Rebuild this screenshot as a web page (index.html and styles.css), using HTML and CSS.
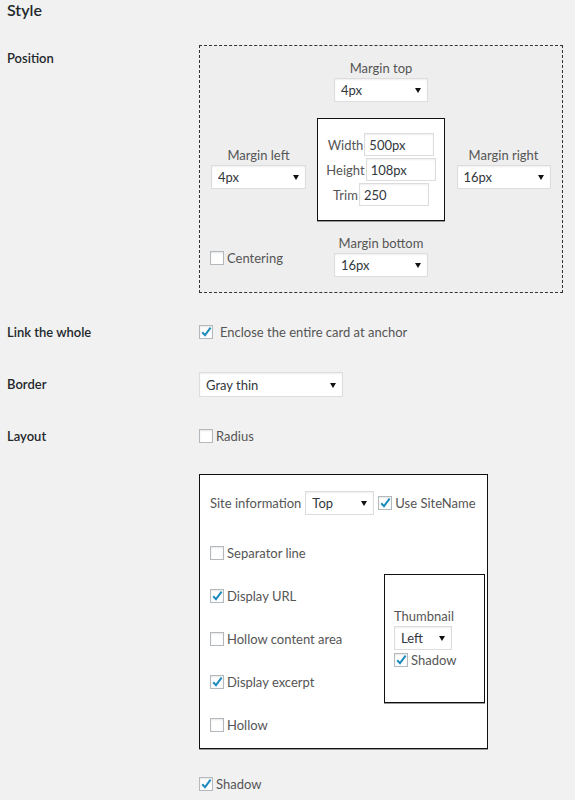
FILE: index.html
```html
<!DOCTYPE html>
<html lang="en">
<head>
<meta charset="utf-8">
<title>Style</title>
<link rel="stylesheet" href="styles.css">
</head>
<body>
<div class="page">
  <h2 class="title">Style</h2>

  <div class="row row-position">
    <div class="th th-position">Position</div>
    <div class="td">
      <div class="pos-box">
        <div class="pos-top">
          <div class="fgroup">
            <div class="flabel">Margin top</div>
            <span class="select w94"><select><option>4px</option></select></span>
          </div>
        </div>
        <div class="pos-mid">
          <div class="fgroup side">
            <div class="flabel">Margin left</div>
            <span class="select w95"><select><option>4px</option></select></span>
          </div>
          <div class="size-box">
            <div class="size-row"><label>Width</label><input class="txt" type="text" value="500px"></div>
            <div class="size-row"><label>Height</label><input class="txt" type="text" value="108px"></div>
            <div class="size-row"><label>Trim</label><input class="txt" type="text" value="250"></div>
          </div>
          <div class="fgroup side">
            <div class="flabel">Margin right</div>
            <span class="select w94"><select><option>16px</option></select></span>
          </div>
        </div>
        <div class="pos-bot">
          <label class="check centering"><span class="cb"></span>Centering</label>
          <div class="fgroup">
            <div class="flabel">Margin bottom</div>
            <span class="select w94"><select><option>16px</option></select></span>
          </div>
          <div></div>
        </div>
      </div>
    </div>
  </div>

  <div class="row row-link">
    <div class="th">Link the whole</div>
    <div class="td">
      <label class="check link-check"><span class="cb"><svg viewBox="0 0 14 14" width="14" height="14"><path d="M3.2 7.2 L6 10.2 L11.6 2.6" fill="none" stroke="#1e8cbe" stroke-width="2"/></svg></span>Enclose the entire card at anchor</label>
    </div>
  </div>

  <div class="row row-border">
    <div class="th th-border">Border</div>
    <div class="td">
      <span class="select w144 tall"><select><option>Gray thin</option></select></span>
    </div>
  </div>

  <div class="row row-layout">
    <div class="th">Layout</div>
    <div class="td">
      <label class="check"><span class="cb"></span>Radius</label>
      <div class="layout-box">
        <div class="site-row">
          <span class="site-label">Site information</span>
          <span class="select w69 h23"><select><option>Top</option></select></span>
          <label class="check sitename"><span class="cb"><svg viewBox="0 0 14 14" width="14" height="14"><path d="M3.2 7.2 L6 10.2 L11.6 2.6" fill="none" stroke="#1e8cbe" stroke-width="2"/></svg></span>Use SiteName</label>
        </div>
        <div class="layout-body">
          <div class="opt-list">
            <label class="check"><span class="cb"></span>Separator line</label>
            <label class="check"><span class="cb"><svg viewBox="0 0 14 14" width="14" height="14"><path d="M3.2 7.2 L6 10.2 L11.6 2.6" fill="none" stroke="#1e8cbe" stroke-width="2"/></svg></span>Display URL</label>
            <label class="check"><span class="cb"></span>Hollow content area</label>
            <label class="check"><span class="cb"><svg viewBox="0 0 14 14" width="14" height="14"><path d="M3.2 7.2 L6 10.2 L11.6 2.6" fill="none" stroke="#1e8cbe" stroke-width="2"/></svg></span>Display excerpt</label>
            <label class="check"><span class="cb"></span>Hollow</label>
          </div>
          <div class="thumb-box">
            <div class="flabel">Thumbnail</div>
            <span class="select w58"><select><option>Left</option></select></span>
            <label class="check thumb-shadow"><span class="cb"><svg viewBox="0 0 14 14" width="14" height="14"><path d="M3.2 7.2 L6 10.2 L11.6 2.6" fill="none" stroke="#1e8cbe" stroke-width="2"/></svg></span>Shadow</label>
          </div>
        </div>
      </div>
      <label class="check bottom-shadow"><span class="cb"><svg viewBox="0 0 14 14" width="14" height="14"><path d="M3.2 7.2 L6 10.2 L11.6 2.6" fill="none" stroke="#1e8cbe" stroke-width="2"/></svg></span>Shadow</label>
    </div>
  </div>
</div>
</body>
</html>
```

FILE: styles.css
```css
body {
  margin: 0;
  background: #f1f1f1;
  font-family: Lato, "Open Sans", sans-serif;
  font-size: 13px;
  color: #555;
}

.page {
  padding: 0 7px;
}

.title {
  margin: 0;
  font-size: 16px;
  font-weight: 600;
  line-height: 20px;
  color: #23282d;
}

.row {
  display: grid;
  grid-template-columns: 192px 1fr;
  align-items: start;
}

.th {
  font-weight: 600;
  font-size: 13px;
  line-height: 20px;
  color: #23282d;
}

.row-position { margin-top: 25px; }
.th-position { padding-top: 3px; }
.row-link { margin-top: 29px; }
.row-border { margin-top: 30px; }
.th-border { line-height: 25px; }
.row-layout { margin-top: 29px; }

/* position box */
.pos-box {
  width: 364px;
  height: 248px;
  box-sizing: border-box;
  border: 1px dashed #333;
  background: #eee;
  padding: 13px 0 15px;
  display: flex;
  flex-direction: column;
}

.pos-top {
  display: flex;
  justify-content: center;
}

.fgroup {
  display: flex;
  flex-direction: column;
  align-items: center;
}

.flabel {
  line-height: 18px;
  margin-bottom: 1px;
  color: #555;
}

.pos-mid {
  display: grid;
  grid-template-columns: 1fr auto 1fr;
  align-items: center;
  justify-items: center;
  margin-top: 16px;
}

.side { margin-bottom: 4px; }

.size-box {
  width: 128px;
  height: 103px;
  box-sizing: border-box;
  border: 1px solid #111;
  box-shadow: 0 1px 0 #999;
  background: #fff;
  padding: 14px 0;
  display: flex;
  flex-direction: column;
  gap: 2px;
}

.size-row {
  display: flex;
  justify-content: center;
  align-items: center;
  gap: 1px;
  height: 23px;
}

.size-row label { color: #555; }

.txt {
  width: 70px;
  height: 23px;
  box-sizing: border-box;
  border: 1px solid #ddd;
  box-shadow: inset 0 1px 2px rgba(0, 0, 0, 0.07);
  background: #fff;
  font: 13px Lato, "Open Sans", sans-serif;
  color: #32373c;
  padding: 0 4px;
  margin: 0;
  outline: none;
}

.pos-bot {
  display: grid;
  grid-template-columns: 1fr auto 1fr;
  align-items: center;
  margin-top: 13px;
}

.centering {
  justify-self: start;
  padding-left: 10px;
  margin-top: 4px;
}

/* select */
.select {
  position: relative;
  display: inline-block;
  height: 24px;
  vertical-align: middle;
}

.select select {
  appearance: none;
  -webkit-appearance: none;
  width: 100%;
  height: 100%;
  box-sizing: border-box;
  border: 1px solid #ddd;
  box-shadow: inset 0 1px 2px rgba(0, 0, 0, 0.07);
  background: #fff;
  border-radius: 0;
  font: 13px Lato, "Open Sans", sans-serif;
  color: #32373c;
  padding: 0 6px;
  margin: 0;
  outline: none;
}

.select::after {
  content: "";
  position: absolute;
  right: 7px;
  top: 50%;
  margin-top: -2px;
  border-left: 3px solid transparent;
  border-right: 3px solid transparent;
  border-top: 5px solid #111;
  pointer-events: none;
}

.w94 { width: 94px; }
.w95 { width: 95px; }
.w144 { width: 144px; }
.w69 { width: 69px; }
.w58 { width: 58px; }
.tall { height: 25px; }
.h23 { height: 24px; }

/* checkbox */
.check {
  display: flex;
  align-items: center;
  line-height: 20px;
  height: 20px;
  color: #555;
}

.cb {
  width: 14px;
  height: 14px;
  box-sizing: border-box;
  border: 1px solid #b4b9be;
  background: #fff;
  box-shadow: inset 0 1px 2px rgba(0, 0, 0, 0.1);
  margin-right: 3px;
  flex: none;
  position: relative;
}

.cb svg {
  position: absolute;
  left: -1px;
  top: -1px;
}

.link-check .cb { margin-right: 7px; }

/* layout box */
.layout-box {
  margin-top: 28px;
  width: 289px;
  height: 275px;
  box-sizing: border-box;
  border: 1px solid #111;
  box-shadow: 0 1px 0 #999;
  background: #fff;
  padding: 16px 2px 13px 10px;
}

.site-row {
  display: flex;
  align-items: center;
  height: 24px;
}

.site-label { margin-right: 4px; }

.sitename {
  margin-left: 4px;
}

.layout-body {
  display: flex;
  justify-content: space-between;
  align-items: flex-start;
  margin-top: 28px;
}

.opt-list {
  display: flex;
  flex-direction: column;
  gap: 23px;
}

.thumb-box {
  margin-top: 31px;
  width: 101px;
  height: 129px;
  box-sizing: border-box;
  border: 1px solid #111;
  box-shadow: 0 1px 0 #999;
  background: #fff;
  padding-left: 9px;
  display: flex;
  flex-direction: column;
  justify-content: center;
  align-items: flex-start;
}

.thumb-box .flabel { margin-bottom: 1px; }

.bottom-shadow { margin-top: 25px; }
```
